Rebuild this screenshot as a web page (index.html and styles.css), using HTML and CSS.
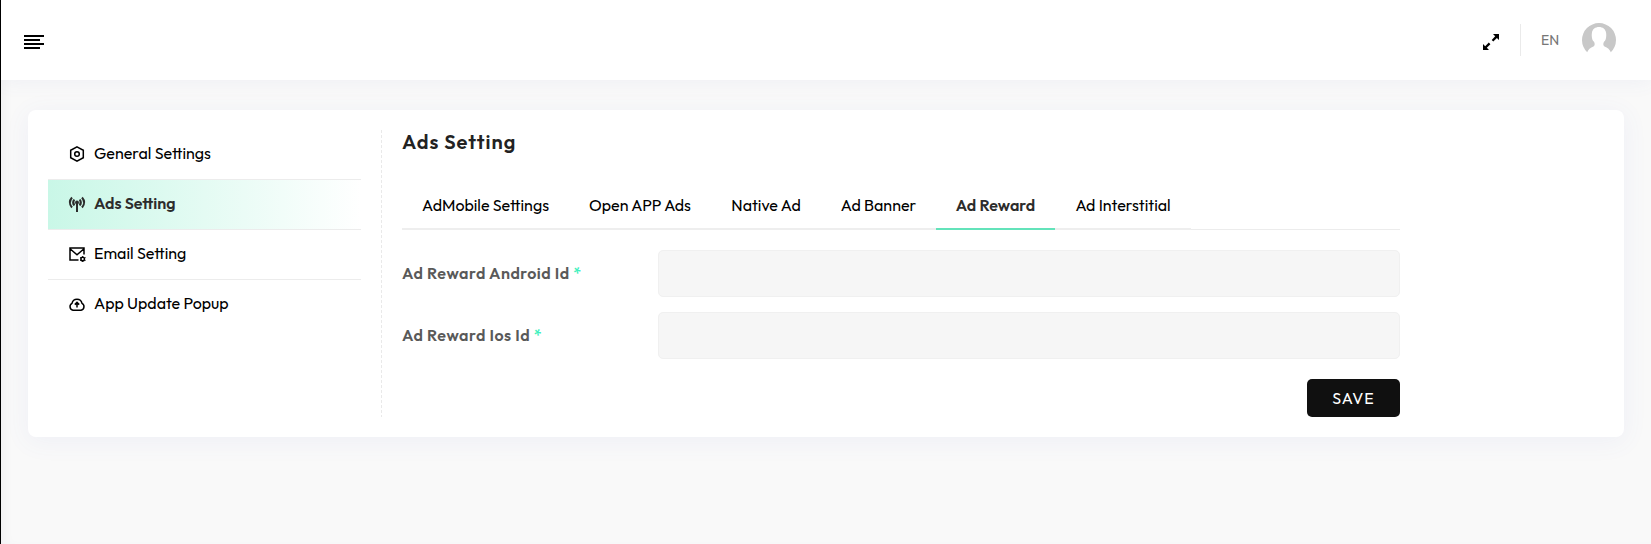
FILE: index.html
```html
<!DOCTYPE html>
<html lang="en">
<head>
<meta charset="utf-8">
<title>Ads Setting</title>
<link rel="stylesheet" href="styles.css">
</head>
<body>
<div class="page">
  <header class="header">
    <svg class="menu-icon" width="20" height="14" viewBox="0 0 20 14"><path d="M0 0h20v2H0zM0 4h16v2H0zM0 8h20v2H0zM0 12h16v2H0z"/></svg>
    <div class="header-actions">
      <svg class="expand-icon" width="16" height="16" viewBox="0 0 16 16"><path d="M10 0h6v6l-2.100-2.100-3.600 3.600-1.600-1.600 3.500-3.600zM0 10l2.200 2.200 3.600-3.600 1.600 1.600-3.600 3.600L6 16H0z"/></svg>
      <span class="separator"></span>
      <span class="lang">EN</span>
      <svg class="avatar" width="34" height="34" viewBox="0 0 34 34"><path d="M5.200 29.300A17 17 0 1 1 28.800 29.300C28 26.500 25.500 24.800 22.500 23.500C21 22.500 21 20.800 22 18.800C24 17.500 24.600 13.500 24.100 10C23.600 6 20.700 4 17 4S10.400 6 9.900 10C9.400 13.500 10 17.500 12 18.800C13 20.800 13 22.500 11.500 23.500C8.500 24.800 6 26.500 5.200 29.300z"/></svg>
    </div>
  </header>
  <main class="card">
    <nav class="side">
      <a class="side-item"><svg class="side-icon" viewBox="0 0 16 16"><path d="M8 .8l6.300 3.500v7.400L8 15.200l-6.300-3.500V4.300z"/><circle cx="8" cy="8" r="2.300"/></svg><span>General Settings</span></a>
      <a class="side-item active"><svg class="side-icon" viewBox="0 0 16 16"><path class="waves" d="M3 1.500Q-1.300 6.500 3 11.500M13 1.500q4.300 5 0 10M5.300 3.500q-2.300 3 0 6M10.700 3.500q2.300 3 0 6M8 7.500V16"/><circle class="solid" cx="8" cy="6.500" r="1.200"/></svg><span>Ads Setting</span></a>
      <a class="side-item"><svg class="side-icon" viewBox="0 0 16 16"><path d="M9.500 14H1V2h14v6.500M1 2.700l7 6 7-6"/><circle cx="13.700" cy="13" r="1.800"/><path class="cog" d="M13.700 10v1M13.700 15v1M11 11.500l1 .5M15.500 14l1 .5M11 14.500l1-.5M15.500 12l1-.5"/></svg><span>Email Setting</span></a>
      <a class="side-item"><svg class="side-icon" viewBox="0 0 16 16"><path d="M4 14.200A3.700 3.700 0 0 1 3 7.300A5.100 5.100 0 0 1 13 7.300A3.700 3.700 0 0 1 12 14.200zM8 11.500V6.500M5.800 8.600L8 6.400l2.200 2.200"/></svg><span>App Update Popup</span></a>
    </nav>
    <section class="content">
      <h1 class="title">Ads Setting</h1>
      <div class="tabs">
        <a class="tab t-mobile">AdMobile Settings</a>
        <a class="tab t-open">Open APP Ads</a>
        <a class="tab t-native">Native Ad</a>
        <a class="tab t-banner">Ad Banner</a>
        <a class="tab t-reward selected">Ad Reward</a>
        <a class="tab t-inter">Ad Interstitial</a>
      </div>
      <form class="form">
        <div class="row"><label for="android">Ad Reward Android Id <span class="required">*</span></label><input id="android" class="field" type="text"></div>
        <div class="row"><label for="ios">Ad Reward Ios Id <span class="required">*</span></label><input id="ios" class="field" type="text"></div>
        <button class="save" type="button">SAVE</button>
      </form>
    </section>
  </main>
</div>
</body>
</html>
```
FILE: styles.css
```css
* { box-sizing: border-box; }
body {
  margin: 0;
  background: #f9f9f9;
  font-family: Outfit, Lato, sans-serif;
  font-size: 16px;
  color: #000;
}
.page { height: 544px; overflow: hidden; border-left: 1px solid #000; box-shadow: inset 8px 0 12px -6px rgba(80, 90, 140, .06); }
.header {
  height: 80px;
  display: flex;
  align-items: center;
  justify-content: space-between;
  padding: 0 35px 0 23px;
  background: #fff;
  box-shadow: 0 0 20px rgba(89, 102, 182, .08);
}
.menu-icon { display: block; margin-top: 4px; }
.header-actions { display: flex; align-items: center; }
.expand-icon { margin: 4px 21px 0 0; }
.separator { width: 1px; height: 32px; background: #eaeaea; margin-right: 20px; }
.lang { width: 18px; font-size: 14px; line-height: 20px; color: #777; margin-right: 23px; white-space: nowrap; }
.avatar { fill: #c8c8c8; display: block; }
.card {
  height: 327px;
  margin: 30px 27px 0;
  padding: 20px;
  display: flex;
  background: #fff;
  border-radius: 8px;
  box-shadow: 0 4px 24px 2px rgba(80, 100, 210, .06);
}
.side {
  width: 334px;
  padding-right: 21px;
  background: repeating-linear-gradient(#e9e9e9 0 3px, transparent 3px 5px) right / 1px 100% no-repeat;
}
.side-item {
  height: 50px;
  display: flex;
  align-items: center;
  gap: 9px;
  padding: 0 0 3px 21px;
  border-bottom: 1px solid #ececec;
  white-space: nowrap;
}
.side-item:last-child { border-bottom-color: transparent; }
.side-icon {
  width: 16px;
  height: 16px;
  margin-top: 2px;
  overflow: visible;
  fill: none;
  stroke: currentColor;
  stroke-width: 1.5;
}
.solid { fill: currentColor; }
.waves { stroke-width: 2; }
.cog { stroke-width: 1; }
.active {
  color: #2c2c2c;
  font-weight: 600;
  background: linear-gradient(90deg, #c9f7e7, #fff);
}
.content { width: 998px; margin-left: 20px; }
.title {
  margin: -1px 0 34px;
  font-size: 20px;
  line-height: 25px;
  font-weight: 600;
  letter-spacing: 1px;
  color: #222;
}
.tabs { height: 42px; display: flex; border-bottom: 1px solid #ececec; }
.tab {
  height: 42px;
  padding-top: 5px;
  line-height: 24px;
  text-align: center;
  white-space: nowrap;
  border-bottom: 2px solid #eee;
}
.selected { color: #2c2c2c; font-weight: 600; border-bottom-color: #63e3ba; }
.t-mobile { width: 167px; }
.t-open { width: 142px; }
.t-native { width: 110px; }
.t-banner { width: 115px; }
.t-reward { width: 119px; }
.t-inter { width: 136px; }
.form { display: flex; flex-direction: column; margin-top: 20px; }
.row { display: flex; align-items: center; justify-content: space-between; height: 47px; margin-bottom: 15px; }
.row label { padding-bottom: 1px; font-weight: 600; letter-spacing: .5px; color: #595959; white-space: nowrap; }
.row .required { color: #3ef0bd; font-weight: 500; }
.field {
  width: 742px;
  height: 47px;
  border: 1px solid #f0f0f0;
  border-radius: 5px;
  background: #f6f6f6;
}
.save {
  align-self: flex-end;
  width: 93px;
  height: 38px;
  margin-top: 5px;
  padding: 0;
  border: 0;
  border-radius: 5px;
  background: #101010;
  color: #fff;
  font: 16px Outfit, Lato, sans-serif;
  letter-spacing: 1px;
}
```
